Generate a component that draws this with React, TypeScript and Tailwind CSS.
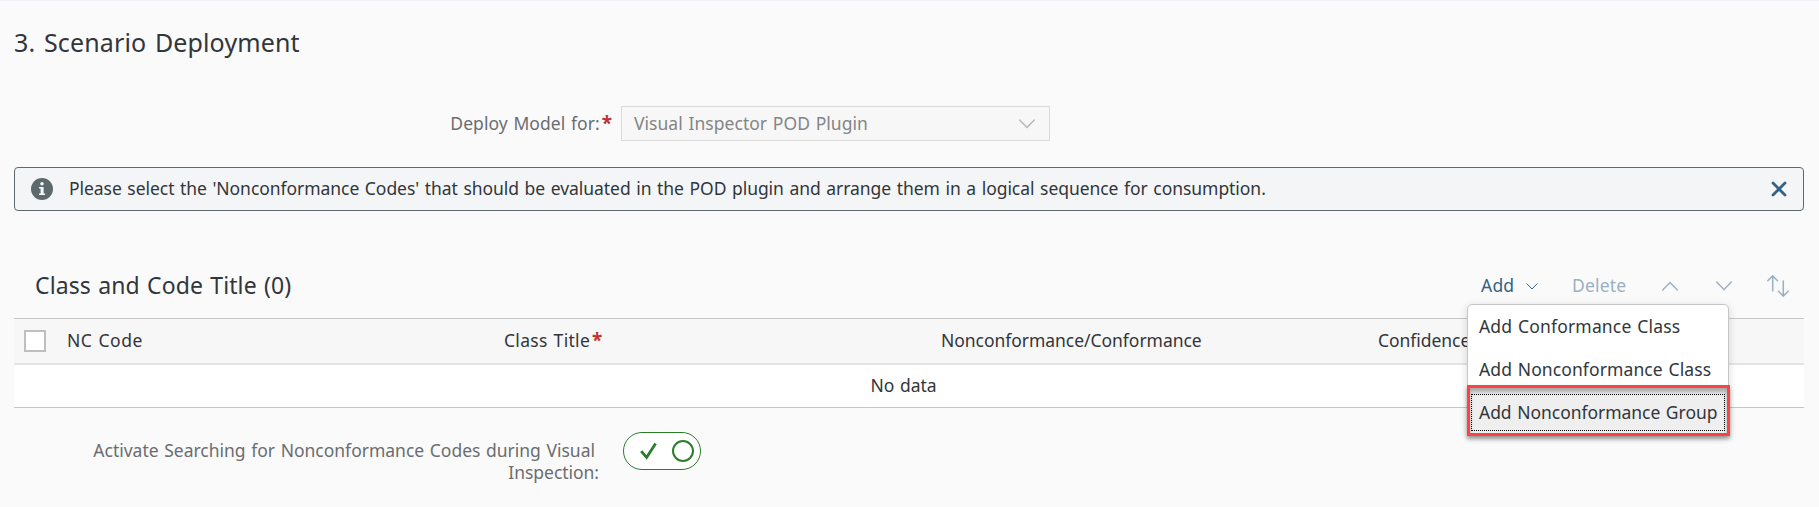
import React from "react";

type IconProps = { className?: string };

const ChevronDown = ({ className = "" }: IconProps) => (
  <svg viewBox="0 0 16 10" fill="none" stroke="currentColor" strokeWidth="1.4" strokeLinecap="round" className={className}>
    <path d="M0.7 1 L8 8.6 L15.3 1" />
  </svg>
);

const ChevronUp = ({ className = "" }: IconProps) => (
  <svg viewBox="0 0 16 10" fill="none" stroke="currentColor" strokeWidth="1.4" strokeLinecap="round" className={className}>
    <path d="M0.7 9 L8 1.4 L15.3 9" />
  </svg>
);

const SortIcon = () => (
  <svg width="22" height="22" viewBox="0 0 22 22" fill="none" stroke="currentColor" strokeWidth="1.5" strokeLinecap="round" className="overflow-visible">
    <path d="M5.7 16V1M0.8 5.8L5.7 0.9L10.6 5.8M16.3 6V21M11.4 16.2L16.3 21.1L21.2 16.2" />
  </svg>
);

const InfoIcon = () => (
  <svg width="22" height="22" viewBox="0 0 22 22">
    <circle cx="11" cy="11" r="11" fill="#5e696e" />
    <circle cx="11" cy="5.8" r="1.8" fill="#f5f6f7" />
    <path d="M8.1 9h4.5v6.6h1.5v1.5H8v-1.5h1.6v-5.1H8.1z" fill="#f5f6f7" />
  </svg>
);

const columns = [
  { label: "NC Code", className: "w-[437px] tracking-[0.5px]", required: false },
  { label: "Class Title", className: "w-[437px] tracking-[0.3px]", required: true },
  { label: "Nonconformance/Conformance", className: "w-[437px]", required: false },
  { label: "Confidence", className: "w-[425px]", required: false },
];

function MessageStrip() {
  return (
    <div className="mt-[26px] flex h-11 items-center rounded-[4px] border border-[#5e696e] bg-[#f4f5f7] pl-4 pr-4">
      <InfoIcon />
      <p className="ml-4 flex-1 pb-[2px] tracking-[-0.05px]">
        Please select the 'Nonconformance Codes' that should be evaluated in the POD plugin and arrange them in a logical
        sequence for consumption.
      </p>
      <svg width="16" height="16" viewBox="0 0 16 16" fill="none" stroke="#346187" strokeWidth="2.8" strokeLinecap="round">
        <path d="M2 2L14 14M14 2L2 14" />
      </svg>
    </div>
  );
}

function AddMenu() {
  return (
    <div className="absolute left-[-14px] top-[30px] z-10 h-[131px] w-[262px] rounded-[5px] border border-[#c6c6c6] bg-white text-[#32363a] shadow-[0_2px_8px_rgba(0,0,0,0.15)]">
      <div className="flex h-[43px] items-center pb-[2px] pl-[11px] tracking-[0.17px]">Add Conformance Class</div>
      <div className="flex h-[43px] items-center pb-[2px] pl-[11px] tracking-[0.1px]">Add Nonconformance Class</div>
      <div className="absolute -left-px top-[80px] h-[51px] w-[263px] border-[3px] border-[#fb4343] bg-[#efefef] shadow-[0_3px_4px_rgba(0,0,0,0.35),inset_0_4px_4px_rgba(0,0,0,0.3)]">
        <div className="ml-px mt-[6px] flex h-[37px] w-[254px] items-center border border-dotted border-black pb-[2px] pl-[7px]">
          Add Nonconformance Group
        </div>
      </div>
    </div>
  );
}

export default function App() {
  return (
    <div className="h-[507px] w-[1819px] overflow-hidden border-t border-[#eff2f6] bg-[#fafafa] pl-[14px] pr-[15px] font-['Noto_Sans',sans-serif] text-[17.5px] leading-[22px] tracking-[-0.04px] text-[#32363a] [word-spacing:1.1px]">
      <h1 className="mt-[25px] text-[25px] leading-8 tracking-[0.14px] [word-spacing:2px]">3. Scenario Deployment</h1>

      <div className="mt-[48px] flex h-[35px] items-center">
        <div className="flex w-[598px] justify-end pb-[2px] text-[#6a6d70]">
          <span className="tracking-[0.05px]">Deploy Model for:</span>
          <b className="ml-[2px] text-[19px] text-[#c63030]">*</b>
        </div>
        <div className="ml-[9px] flex h-[35px] w-[429px] items-center justify-between border border-[#dadada] bg-[#f7f7f7] pl-3 pr-[14px] text-[#848586]">
          <span className="pb-[2px] tracking-[0.04px]">Visual Inspector POD Plugin</span>
          <ChevronDown className="h-[10px] w-4 text-[#b5b6b7]" />
        </div>
      </div>

      <MessageStrip />

      <div className="mt-[45px] flex h-[62px] items-start pl-[21px] pt-[15px]">
        <h2 className="flex-1 text-[23px] leading-7 tracking-[0.1px] [word-spacing:1.2px]">Class and Code Title (0)</h2>
        <div className="flex h-[30px] items-center text-[#9ab0c3]">
          <div className="relative flex w-[91px] items-center text-[#346187]">
            <span className="w-[45px] pb-[2px] tracking-[0.2px]">Add</span>
            <ChevronDown className="h-[7px] w-3" />
            <AddMenu />
          </div>
          <span className="w-[90px] pb-[2px] tracking-[0.2px]">Delete</span>
          <ChevronUp className="h-[10px] w-4" />
          <ChevronDown className="ml-[38px] h-[10px] w-4" />
          <div className="ml-[35px] mr-[15px]">
            <SortIcon />
          </div>
        </div>
      </div>

      <div className="border-y border-[#c6c6c6] bg-white">
        <div className="flex h-[46px] items-center border-b-2 border-[#e4e4e4] bg-[#f7f7f7]">
          <div className="ml-[10px] mr-[21px] h-[22px] w-[22px] shrink-0 border-2 border-[#bfbfbf] bg-white" />
          {columns.map((column) => (
            <div key={column.label} className={`${column.className} flex shrink-0 pb-[2px]`}>
              <span>{column.label}</span>
              {column.required && <b className="ml-[2px] text-[19px] text-[#c63030]">*</b>}
            </div>
          ))}
        </div>
        <div className="flex h-[42px] items-center justify-center pb-[2px] pr-[11px]">No data</div>
      </div>

      <div className="mt-[24px] flex items-start">
        <div className="mt-[7px] w-[585px] text-right text-[#6a6d70]">
          <div className="pr-[4px] tracking-[-0.01px]">Activate Searching for Nonconformance Codes during Visual</div>
          <div>Inspection:</div>
        </div>
        <div className="ml-6 flex h-[38px] w-[78px] items-center rounded-[19px] border border-[#2b7c2b] bg-white pl-4 pr-[6px]">
          <svg width="17" height="18" viewBox="0 0 17 18" fill="none" stroke="#2b7c2b" strokeWidth="2.8">
            <path d="M1.2 9.2L6.6 15.4L15.6 1.6" />
          </svg>
          <div className="ml-auto h-[22px] w-[22px] rounded-full border-2 border-[#2b7c2b]" />
        </div>
      </div>
    </div>
  );
}
